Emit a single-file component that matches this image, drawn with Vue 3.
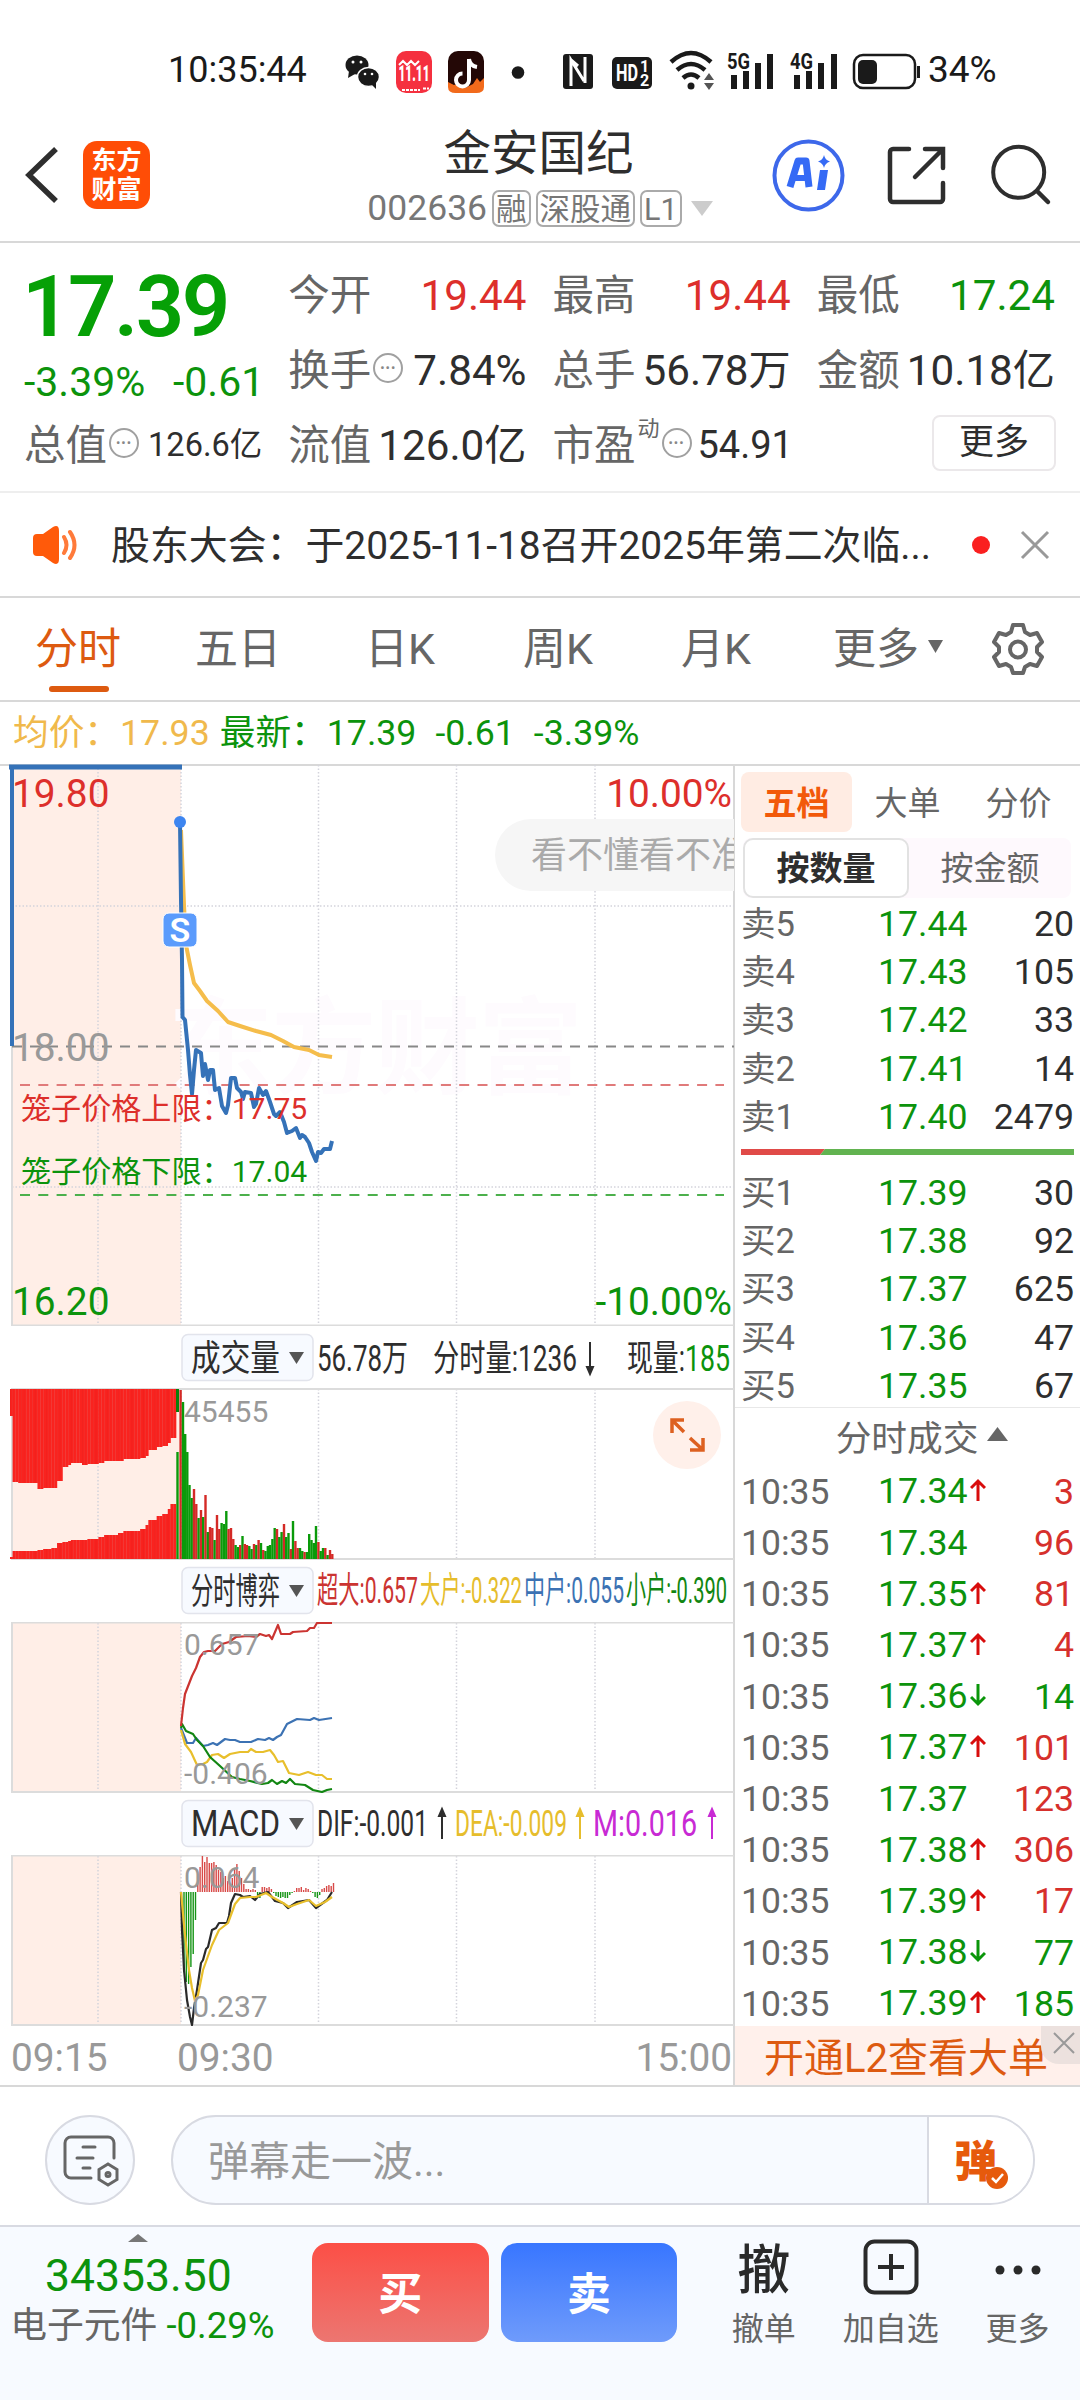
<template>
  <div class="page">
    <!-- Status bar -->
    <div class="status-bar">
      <span class="clock">10:35:44</span>
      <svg class="status-icons" width="590" height="50" viewBox="340 45 590 50">
        <g fill="#1a1a1a">
          <ellipse cx="357" cy="65" rx="11.5" ry="9.5" />
          <path d="M349 71l-1 7 7-4z" />
          <ellipse cx="368.500" cy="77" rx="11" ry="9.500" stroke="#fff" stroke-width="1.500" />
          <path d="M371 84l5 5v-7z" />
        </g>
        <g fill="#fff">
          <circle cx="353" cy="62" r="1.500" />
          <circle cx="361" cy="62" r="1.500" />
          <circle cx="365" cy="74" r="1.300" />
          <circle cx="372" cy="74" r="1.300" />
        </g>
        <rect x="396" y="51" width="36" height="42" rx="10" fill="#f5303f" />
        <text x="398.500" y="81" class="sale" textLength="31" lengthAdjust="spacingAndGlyphs">11.11</text>
        <path d="M399 65l4-4 4 4 4-4 4 4 4-4" fill="none" stroke="#fff" stroke-width="2" />
        <path d="M402 90h18M423 88.500h6" stroke="#fff" stroke-width="2" stroke-dasharray="3 1" />
        <rect x="448" y="51" width="36" height="42" rx="10" fill="#240806" />
        <path d="M448 82l6 3 5-2 6 5 8-4 4-6 3 4 4-4v9q0 6-8 6h-20q-8 0-8-6z" fill="#f26a1b" />
        <path d="M469 59v21a6.500 6.500 0 1 1-6.500-6.500M469 59q1 7 8 8" fill="none" stroke="#fff" stroke-width="4" />
        <circle cx="518" cy="72.500" r="6.300" fill="#1a1a1a" />
        <rect x="563" y="54" width="30" height="35" rx="3" fill="#1a1a1a" />
        <path d="M571 86V60l13 21M571 60l7 6M585 57v26" fill="none" stroke="#fff" stroke-width="3" />
        <rect x="612" y="57" width="40" height="32" rx="5" fill="#1a1a1a" />
        <text x="616" y="81" class="hd" textLength="22" lengthAdjust="spacingAndGlyphs">HD</text>
        <text x="640" y="72" class="hd-num">1</text>
        <text x="640" y="86" class="hd-num">2</text>
        <g fill="none" stroke="#1a1a1a" stroke-width="4.500">
          <path d="M671 62q20-18 40 0" />
          <path d="M677 70q14-12 28 0" />
          <path d="M683 78q8-7 16 0" />
        </g>
        <circle cx="691" cy="86" r="3.500" fill="#1a1a1a" />
        <path d="M704 80l5-7 5 7zM704 83l5 7 5-7z" fill="#555" />
        <g fill="#1a1a1a">
          <path d="M731 75h6v14h-6zM743 71h6v18h-6zM755 63h6v26h-6zM767 54h6v35h-6z" />
          <path d="M794 75h6v14h-6zM806 71h6v18h-6zM818 63h6v26h-6zM831 54h6v35h-6z" />
          <text x="727" y="69" class="net" textLength="23" lengthAdjust="spacingAndGlyphs">5G</text>
          <text x="790" y="69" class="net" textLength="23" lengthAdjust="spacingAndGlyphs">4G</text>
        </g>
        <rect x="854" y="55" width="61" height="33" rx="9" fill="none" stroke="#1a1a1a" stroke-width="2.500" />
        <rect x="858" y="60" width="19" height="24" rx="5" fill="#1a1a1a" />
        <path d="M918.500 66v12" stroke="#1a1a1a" stroke-width="3" />
      </svg>
      <span class="battery">34%</span>
    </div>

    <!-- Title bar -->
    <header class="header">
      <div class="header-left">
        <svg width="36" height="60" viewBox="0 0 36 60" fill="none" stroke="#2e2e2e" stroke-width="5.500">
          <path d="M33 4L6 30l27 26" />
        </svg>
        <div class="logo"><span>东方</span><span>财富</span></div>
      </div>
      <div class="header-title">
        <h1>金安国纪</h1>
        <div class="code-row">
          <span class="code">002636</span>
          <span v-for="t in tags" :key="t" class="tag">{{ t }}</span>
          <svg width="22" height="15" viewBox="0 0 22 15"><path d="M0 0h22L11 15z" fill="#ccc" /></svg>
        </div>
      </div>
      <svg class="header-icons" width="300" height="100" viewBox="0 0 300 100" fill="none">
        <circle cx="48.500" cy="45.500" r="34" stroke="#3d68ea" stroke-width="4" />
        <path d="M30 57L38 31h8l3 26" stroke="#356af5" stroke-width="7" stroke-linejoin="round" />
        <path d="M34 48h13" stroke="#356af5" stroke-width="6" />
        <path d="M60 40h8l-3 20h-8z" fill="#356af5" />
        <path d="M64 25q1 5 6 6.500-5 1.500-6 6.500-1-5-6-6.500 5-1.500 6-6.500z" fill="#356af5" />
        <path d="M149 19h-16a3 3 0 0 0-3 3v47a3 3 0 0 0 3 3h47a3 3 0 0 0 3-3V53M165 19h18v19M182 20l-27 27" stroke="#2e2e2e" stroke-width="4.500" stroke-linecap="round" />
        <circle cx="258.700" cy="42.300" r="25.500" stroke="#2e2e2e" stroke-width="4" />
        <path d="M277 61l11 11" stroke="#2e2e2e" stroke-width="4.500" stroke-linecap="round" />
      </svg>
    </header>

    <!-- Quote summary -->
    <section class="quote">
      <div class="quote-main">
        <div class="price">17.39</div>
        <div class="change"><span>-3.39%</span><span>-0.61</span></div>
        <div class="cell small">
          <span class="label">总值<i class="info">•••</i></span>
          <span class="value">126.6亿</span>
        </div>
      </div>
      <div v-for="(col, i) in quotes" :key="i" class="quote-col">
        <div v-for="q in col" :key="q.label" class="cell">
          <span class="label">{{ q.label }}<sup v-if="q.sup">{{ q.sup }}</sup><i v-if="q.info" class="info">•••</i></span>
          <span class="value" :class="[q.color, { pe: q.sup }]">{{ q.value }}</span>
        </div>
        <div v-if="i === 2" class="cell last"><button class="more-btn">更多</button></div>
      </div>
    </section>

    <!-- Notice -->
    <section class="notice">
      <svg width="46" height="38" viewBox="0 0 46 38">
        <path d="M0 12q0-4 4-4h6L20 1q6-3 6 4v28q0 7-6 4l-10-7H4q-4 0-4-4z" fill="#ff5a0a" />
        <path d="M31 11q5 8 0 16M37 6q9 13 0 26" fill="none" stroke="#ff7a3a" stroke-width="4" stroke-linecap="round" />
      </svg>
      <p>股东大会：于2025-11-18召开2025年第二次临...</p>
      <span class="red-dot"></span>
      <svg width="30" height="30" viewBox="0 0 30 30"><path d="M2 2l26 26M28 2L2 28" stroke="#999" stroke-width="3" /></svg>
    </section>

    <!-- Period tabs -->
    <nav class="tabs">
      <span v-for="(t, i) in tabs" :key="t" class="tab" :class="{ active: i === 0 }">{{ t }}</span>
      <span class="tab tab-more">更多<svg width="15" height="13" viewBox="0 0 15 13"><path d="M0 0h15L7.500 13z" fill="#666" /></svg></span>
      <svg width="54" height="54" viewBox="0 0 54 54" fill="none" stroke="#666" stroke-width="4" stroke-linejoin="round">
        <path d="M22 3h10l2 7 5 3 7-2 5 9-5 5v5l5 5-5 9-7-2-5 3-2 6H22l-2-6-5-3-7 2-5-9 5-5v-5l-5-5 5-9 7 2 5-3z" />
        <circle cx="27" cy="27.500" r="8" />
      </svg>
    </nav>

    <div class="legend">
      <span class="avg">均价：17.93</span>
      <span class="last-price">最新：17.39</span>
      <span>-0.61</span>
      <span>-3.39%</span>
    </div>

    <main class="main">
      <div class="charts">
        <!-- Intraday price -->
        <svg class="chart" width="734" height="562" viewBox="0 764 734 562">
          <rect x="12" y="765" width="169" height="560" class="pre" />
          <text x="168" y="1085" class="watermark" textLength="415">东方财富</text>
          <path v-for="x in gridX" :key="x" :d="`M${x} 765V1325`" class="grid" />
          <path d="M12 906H734M12 1187H734" class="grid" />
          <path d="M12 764V1325.500H734" class="frame" />
          <path d="M12 1046.500H734" stroke="#888" stroke-width="2" stroke-dasharray="10 8" />
          <path d="M20 1085H724" stroke="#e07a7a" stroke-width="2" stroke-dasharray="10 8.300" />
          <path d="M20 1195H724" stroke="#4cb04c" stroke-width="2" stroke-dasharray="10 8.300" />
          <path d="M9 767H182" stroke="#3572b8" stroke-width="5" />
          <path d="M12 767V1046" stroke="#3572b8" stroke-width="4" />
          <polyline :points="avgLine" class="line" stroke="#f5bd4b" stroke-width="4" />
          <polyline :points="priceLine" class="line" stroke="#3572b8" stroke-width="4" />
          <circle cx="180" cy="822" r="6" fill="#3d85f0" />
          <rect x="163" y="913" width="34" height="34" rx="6" fill="#5b9bfc" stroke="#fff" />
          <text x="180" y="942" class="marker">S</text>
          <text x="12" y="807" class="axis red">19.80</text>
          <text x="732" y="807" class="axis end red">10.00%</text>
          <text x="12" y="1061" class="axis">18.00</text>
          <text x="12" y="1315" class="axis green">16.20</text>
          <text x="732" y="1315" class="axis end green">-10.00%</text>
          <text x="21" y="1119" class="cage red">笼子价格上限：17.75</text>
          <text x="21" y="1182" class="cage green">笼子价格下限：17.04</text>
          <rect x="495" y="819" width="300" height="72" rx="36" fill="#f6f6f6" />
          <text x="531" y="868" class="bullet">看不懂看不准</text>
        </svg>

        <div class="sub-head">
          <svg width="734" height="62" viewBox="0 0 734 62">
            <rect x="182" y="8.500" width="131" height="46" rx="6" class="picker" />
            <text x="191" y="45" textLength="89" lengthAdjust="spacingAndGlyphs" class="pick">成交量</text>
            <path d="M289 26h15l-7.500 12z" fill="#555" />
            <text x="317" y="45" textLength="91" lengthAdjust="spacingAndGlyphs">56.78万</text>
            <text x="433" y="45" textLength="144" lengthAdjust="spacingAndGlyphs">分时量:1236</text>
            <path d="M590 16v28M587 41h6l-3 7z" class="arrow" />
            <text x="627" y="45" textLength="58" lengthAdjust="spacingAndGlyphs">现量:</text>
            <text x="685" y="45" textLength="45" lengthAdjust="spacingAndGlyphs" class="green">185</text>
          </svg>
        </div>

        <!-- Volume -->
        <svg class="chart" width="734" height="172" viewBox="0 1388 734 172">
          <rect x="12" y="1389" width="169" height="170" class="pre" />
          <path v-for="x in gridX" :key="x" :d="`M${x} 1389V1559`" class="grid" />
          <path d="M734 1389H12V1559H734" class="frame" />
          <rect v-for="(b, i) in auctionBars" :key="'a' + i" :x="b.x" :y="b.y" width="2.900" :height="b.h" fill="#f9231f" />
          <rect v-for="(b, i) in auctionBars" :key="'s' + i" :x="b.x" :y="b.y" width="0.300" :height="b.h" fill="#e01c1c" />
          <rect x="176" y="1389" width="3" height="23" fill="#08800a" />
          <rect v-for="b in volBars" :key="b[0]" :x="b[0] - 1.2" :y="b[1]" width="2.400" :height="1559 - b[1]" :fill="b[2] ? '#d42a26' : '#0a9a0a'" />
          <text x="184" y="1422" class="scale">45455</text>
          <circle cx="687" cy="1435" r="34" fill="#fff0ea" />
          <path d="M672 1433v-13h12M672 1420l12 12M703 1438v12h-13M703 1450l-13-12" fill="none" stroke="#dd6020" stroke-width="3.500" />
        </svg>

        <div class="sub-head">
          <svg width="734" height="62" viewBox="0 0 734 62">
            <rect x="182" y="7.500" width="131" height="46" rx="6" class="picker" />
            <text x="191" y="44" textLength="89" lengthAdjust="spacingAndGlyphs" class="pick">分时博弈</text>
            <path d="M289 25h15l-7.500 12z" fill="#555" />
            <text x="317" y="43" textLength="101" lengthAdjust="spacingAndGlyphs" fill="#cb3431">超大:0.657</text>
            <text x="420" y="43" textLength="102" lengthAdjust="spacingAndGlyphs" class="yellow">大户:-0.322</text>
            <text x="524" y="43" textLength="100" lengthAdjust="spacingAndGlyphs" fill="#3c72b3">中户:0.055</text>
            <text x="626" y="43" textLength="101" lengthAdjust="spacingAndGlyphs" fill="#128612">小户:-0.390</text>
          </svg>
        </div>

        <!-- Capital game -->
        <svg class="chart" width="734" height="171" viewBox="0 1622 734 171">
          <rect x="12" y="1623" width="169" height="169" class="pre" />
          <path v-for="x in gridX" :key="x" :d="`M${x} 1623V1792`" class="grid" />
          <path d="M734 1622.500H12V1792H734" class="frame" />
          <polyline v-for="g in gameLines" :key="g.color" :points="g.points" class="line" :stroke="g.color" stroke-width="2.200" />
          <text x="184" y="1655" class="scale">0.657</text>
          <text x="184" y="1784" class="scale">-0.406</text>
        </svg>

        <div class="sub-head">
          <svg width="734" height="62" viewBox="0 0 734 62">
            <rect x="182" y="7.500" width="131" height="46" rx="6" class="picker" />
            <text x="191" y="43" textLength="89" lengthAdjust="spacingAndGlyphs" class="pick">MACD</text>
            <path d="M289 25h15l-7.500 12z" fill="#555" />
            <text x="317" y="43" textLength="111" lengthAdjust="spacingAndGlyphs">DIF:-0.001</text>
            <path d="M442 46V22M439 23h6l-3-7z" class="arrow" />
            <text x="455" y="43" textLength="112" lengthAdjust="spacingAndGlyphs" class="yellow">DEA:-0.009</text>
            <path d="M580 46V22M577 23h6l-3-7z" class="arrow arrow-yellow" />
            <text x="593" y="43" textLength="104" lengthAdjust="spacingAndGlyphs" fill="#c82ad4">M:0.016</text>
            <path d="M712 46V22M709 23h6l-3-7z" class="arrow arrow-purple" />
          </svg>
        </div>

        <!-- MACD -->
        <svg class="chart" width="734" height="171" viewBox="0 1855 734 171">
          <rect x="12" y="1856" width="169" height="169" class="pre" />
          <path v-for="x in gridX" :key="x" :d="`M${x} 1856V2025`" class="grid" />
          <path d="M734 1855.500H12V2025H734" class="frame" />
          <rect v-for="(h, i) in macdBars" :key="i" :x="181 + i * 2.3" :y="h > 0 ? 1892 - h : 1892" width="1.400" :height="Math.abs(h)" :fill="h > 0 ? '#d84a48' : '#149414'" />
          <polyline :points="difLine" class="line" stroke="#2a2a2a" stroke-width="2.200" />
          <polyline :points="deaLine" class="line" stroke="#e8bf2c" stroke-width="2.200" />
          <text x="184" y="1888" class="scale">0.064</text>
          <text x="184" y="2017" class="scale">-0.237</text>
        </svg>

        <div class="time-axis"><span>09:15</span><span>09:30</span><span class="close-time">15:00</span></div>
      </div>

      <!-- Order book -->
      <aside class="book">
        <div class="book-tabs"><span class="on">五档</span><span>大单</span><span>分价</span></div>
        <div class="segment"><span class="on">按数量</span><span>按金额</span></div>
        <div class="levels">
          <div v-for="r in sells" :key="r[0]" class="row level">
            <span>{{ r[0] }}</span><span class="green">{{ r[1] }}</span><span class="vol">{{ r[2] }}</span>
          </div>
        </div>
        <svg class="ratio" width="333" height="6" viewBox="0 0 333 6">
          <path d="M0 0h84l-5 6H0z" fill="#e04a48" /><path d="M84 0h249v6H79z" fill="#62b350" />
        </svg>
        <div class="levels buys">
          <div v-for="r in buys" :key="r[0]" class="row level">
            <span>{{ r[0] }}</span><span class="green">{{ r[1] }}</span><span class="vol">{{ r[2] }}</span>
          </div>
        </div>
        <div class="deals-title">分时成交<svg width="21" height="14" viewBox="0 0 21 14"><path d="M0 14L10.500 0 21 14z" fill="#666" /></svg></div>
        <div v-for="(d, i) in deals" :key="i" class="row deal">
          <span>10:35</span>
          <span class="green deal-price">{{ d[0] }}<svg v-if="d[1]" width="16" height="24" viewBox="0 0 16 24" fill="none" stroke-width="3">
            <path v-if="d[1] > 0" d="M8 23V3M1 10l7-7 7 7" stroke="#d80c0c" />
            <path v-else d="M8 1v20M1 14l7 7 7-7" stroke="#0a960a" />
          </svg></span>
          <span class="vol" :class="d[3] ? 'green' : 'red'">{{ d[2] }}</span>
        </div>
        <div class="l2-banner">
          开通L2查看大单
          <span class="l2-close"><svg width="22" height="22" viewBox="0 0 22 22"><path d="M1 1l20 20M21 1L1 21" stroke="#999" stroke-width="2" /></svg></span>
        </div>
      </aside>
    </main>

    <!-- Comment bar -->
    <section class="comment">
      <div class="round-btn">
        <svg width="58" height="58" viewBox="0 0 58 58" fill="none" stroke="#666" stroke-width="3" stroke-linecap="round">
          <path d="M30 47H10a6 6 0 0 1-6-6V12a6 6 0 0 1 6-6h37a6 6 0 0 1 6 6v15M22 16h12M16 27h16M22 37h7" />
          <path d="M47 33l9 5.500v10L47 54l-9-5.500v-10z" />
          <circle cx="47" cy="43.500" r="2" />
        </svg>
      </div>
      <div class="input">
        <span class="placeholder">弹幕走一波...</span>
        <span class="danmu">弹<svg width="22" height="22" viewBox="0 0 22 22"><circle cx="11" cy="11" r="11" fill="#e65a0c" /><path d="M6 11l4 4 7-8" fill="none" stroke="#fff" stroke-width="2.500" /></svg></span>
      </div>
    </section>

    <!-- Bottom bar -->
    <footer class="bottom">
      <div class="index">
        <svg width="20" height="8" viewBox="0 0 20 8"><path d="M0 8l10-8 10 8z" fill="#777" /></svg>
        <div class="index-value">34353.50</div>
        <div class="index-name">电子元件 <span>-0.29%</span></div>
      </div>
      <button class="trade buy">买</button>
      <button class="trade sell">卖</button>
      <div class="action cancel"><b>撤</b><span>撤单</span></div>
      <div class="action add">
        <svg width="56" height="56" viewBox="0 0 56 56" fill="none" stroke="#2a2a2a" stroke-width="4">
          <rect x="2.500" y="2.500" width="51" height="51" rx="9" /><path d="M28 15v26M15 28h26" />
        </svg>
        <span>加自选</span>
      </div>
      <div class="action">
        <svg width="56" height="56" viewBox="0 0 56 56" fill="#2a2a2a"><circle cx="10" cy="31" r="4.500" /><circle cx="28" cy="31" r="4.500" /><circle cx="46" cy="31" r="4.500" /></svg>
        <span>更多</span>
      </div>
    </footer>
  </div>
</template>

<script setup>
const tags = ['融', '深股通', 'L1']
const tabs = ['分时', '五日', '日K', '周K', '月K']

const quotes = [
  [
    { label: '今开', value: '19.44', color: 'red' },
    { label: '换手', value: '7.84%', info: true },
    { label: '流值', value: '126.0亿' }
  ],
  [
    { label: '最高', value: '19.44', color: 'red' },
    { label: '总手', value: '56.78万' },
    { label: '市盈', value: '54.91', sup: '动', info: true }
  ],
  [
    { label: '最低', value: '17.24', color: 'green' },
    { label: '金额', value: '10.18亿' }
  ]
]

const sells = [
  ['卖5', '17.44', 20],
  ['卖4', '17.43', 105],
  ['卖3', '17.42', 33],
  ['卖2', '17.41', 14],
  ['卖1', '17.40', 2479]
]
const buys = [
  ['买1', '17.39', 30],
  ['买2', '17.38', 92],
  ['买3', '17.37', 625],
  ['买4', '17.36', 47],
  ['买5', '17.35', 67]
]

// price, direction, volume, sold
const deals = [
  ['17.34', 1, 3],
  ['17.34', 0, 96],
  ['17.35', 1, 81],
  ['17.37', 1, 4],
  ['17.36', -1, 14, true],
  ['17.37', 1, 101],
  ['17.37', 0, 123],
  ['17.38', 1, 306],
  ['17.39', 1, 17],
  ['17.38', -1, 77, true],
  ['17.39', 1, 185, true]
]

const gridX = [98, 181, 318.5, 456.5, 595]

const priceLine = '180,822 181,900 182,960 182.500,1017 185,1020 188,1050 190,1075 192,1094 194,1070 196,1050 201,1053 202,1065 203,1076 205,1064 208,1080 210,1070 213,1070 215,1090 219,1088 222,1106 226,1113 228,1105 231,1078 235,1078 237,1088 241,1092 243,1099 245,1092 251,1093 254,1107 256,1104 259,1088 263,1095 266,1091 270,1102 274,1114 276,1116 280,1112 284,1122 287,1133 292,1131 296,1128 300,1138 302,1135 305,1137 309,1143 312,1152 316,1161 318,1152 321,1153 324,1149 330,1149 332,1141'
const avgLine = '181,830 184,905 186,945 190,965 194,983 200,991 207,1001 218,1011 228,1022 240,1026 256,1031 271,1035 283,1041 294,1047 309,1050 319,1055 332,1057'

const gameLines = [
  { color: '#3c72b3', points: '181,1728 187,1743 193,1743 196,1738 203,1746 208,1745 213,1743 217,1745 225,1739 230,1740 235,1740 240,1742 251,1742 258,1739 265,1740 269,1738 273,1740 277,1737 281,1735 287,1724 293,1721 297,1719 310,1720 314,1718 319,1720 332,1718' },
  { color: '#e8bf2c', points: '181,1730 185,1744 191,1752 197,1765 203,1764 207,1762 212,1755 218,1754 224,1758 230,1754 240,1752 248,1752 251,1749 256,1752 263,1752 270,1750 274,1755 278,1762 283,1761 289,1773 299,1775 308,1772 316,1775 322,1775 327,1779 332,1779' },
  { color: '#128612', points: '181,1728 182,1724 186,1731 193,1734 197,1740 203,1746 210,1757 220,1766 232,1777 240,1779 250,1781 262,1784 268,1783 272,1780 277,1784 282,1781 286,1783 290,1779 295,1784 305,1785 313,1790 322,1792 327,1790 332,1789' },
  { color: '#cb3431', points: '181,1726 183,1708 185,1694 192,1676 196,1668 200,1657 204,1652 208,1651 215,1651 222,1644 229,1642 236,1637 248,1636 256,1637 260,1634 266,1636 269,1635 272,1639 278,1625 281,1634 290,1634 293,1632 307,1631 310,1628 314,1628 317,1623 332,1623' }
]

const difLine = '181,1892 182,1930 184,1970 187,2000 190,2017 192,2025 194,2008 197,1990 201,1963 203,1960 206,1949 208,1947 212,1930 216,1928 219,1923 227,1923 229,1916 231,1903 235,1894 240,1895 243,1897 250,1896 255,1900 260,1894 268,1892 275,1901 283,1903 288,1908 297,1902 309,1900 316,1908 327,1900 332,1892'
const deaLine = '181,1892 185,1935 189,1970 192,1988 195,2001 198,1995 203,1970 212,1945 219,1930 228,1923 235,1904 240,1898 250,1897 256,1897 266,1893 272,1897 283,1903 289,1907 297,1904 309,1900 316,1906 325,1902 332,1897'

const macdBars = [
  0, -80, -90, -92, -75, -62, -28, 12, 25, 36, 30, 35, 29, 29, 30, 27, 22, 20, 14, 16,
  11, 7, 14, 23, 28, 21, 14, 8, 3, 3, 2, 3, 2, -3, -6, 5, 5, 4, 5, 3,
  -1, -4, -5, -6, -5, -6, -6, -3, -1, 1, 4, 4, 5, 2, 4, 3, 1, -1, -5, -6,
  -3, 3, 4, 6, 7, 6, 9
]

// x, y edge of the upper and lower auction areas
const auction = [
  [10, 1416, 1557], [13, 1482, 1551], [18, 1483, 1551], [36, 1489, 1550], [43, 1488, 1549], [50, 1488, 1548],
  [56, 1481, 1543], [61, 1467, 1542], [66, 1465, 1541], [69, 1463, 1540], [80, 1465, 1540], [88, 1464, 1539],
  [98, 1463, 1537], [103, 1461, 1535], [118, 1461, 1533], [124, 1459, 1531], [138, 1458, 1529], [144, 1456, 1525],
  [149, 1450, 1520], [155, 1447, 1516], [162, 1446, 1514], [168, 1443, 1509], [171, 1438, 1504], [174, 1416, 1482]
]
const auctionBars = []
for (let x = 10; x < 176; x += 2.77) {
  const step = auction.filter((a) => a[0] <= x + 0.5).pop()
  auctionBars.push({ x, y: 1389, h: step[1] - 1389 }, { x, y: step[2], h: 1559 - step[2] })
}

// x, top, rising
const volBars = [
  [177.500, 1452, 0], [180.600, 1390, 1], [183, 1402, 0], [185.200, 1434, 0], [187.300, 1452, 0], [189.500, 1485, 0],
  [191.700, 1498, 0], [194, 1489, 1], [196.300, 1504, 1], [198.600, 1518, 0], [201, 1510, 1], [203.200, 1517, 0],
  [205.500, 1495, 1], [207.800, 1532, 0], [210, 1527, 1], [212.300, 1528, 1], [214.600, 1540, 0], [217, 1515, 1],
  [219.300, 1529, 1], [221.600, 1523, 0], [224, 1524, 0], [226.300, 1511, 0], [228.600, 1529, 1], [231, 1528, 1],
  [233.300, 1539, 1], [235.600, 1545, 0], [238, 1547, 0], [240.200, 1545, 1], [242.500, 1536, 0], [244.800, 1544, 1],
  [247, 1545, 1], [249.300, 1546, 0], [251.600, 1549, 0], [254, 1544, 1], [256.300, 1545, 0], [258.600, 1540, 1],
  [261, 1543, 0], [263.300, 1550, 1], [265.500, 1551, 0], [267.800, 1546, 0], [270, 1545, 0], [272.400, 1539, 0],
  [274.700, 1528, 0], [277, 1529, 1], [279.300, 1537, 0], [281.600, 1532, 0], [284, 1524, 1], [286.200, 1537, 0],
  [288.500, 1533, 0], [290.800, 1549, 1], [293, 1521, 0], [295.400, 1541, 1], [297.700, 1548, 1], [300, 1548, 0],
  [302.300, 1551, 0], [304.600, 1552, 1], [307, 1552, 0], [309.200, 1534, 0], [311.500, 1540, 0], [313.800, 1543, 0],
  [316, 1526, 0], [318.400, 1542, 1], [320.700, 1551, 0], [323, 1548, 0], [325.300, 1548, 1], [327.600, 1555, 0],
  [330, 1550, 1], [332.300, 1554, 1]
]
</script>

<style>
body {
  background: #fff;
}
</style>

<style scoped>
.page {
  width: 1080px;
  height: 2400px;
  overflow: hidden;
  background: #fff;
  color: #2e2e2e;
  font-family: Roboto, 'Noto Sans CJK SC', sans-serif;
}

.page * {
  box-sizing: border-box;
}

svg {
  display: block;
  flex-shrink: 0;
}

.red {
  color: #dd2f2b;
  fill: #dd2f2b;
}

.green {
  color: #0c930c;
  fill: #0c930c;
}

/* Status bar */
.status-bar {
  display: flex;
  height: 90px;
  padding: 45px 0 0 168px;
  font-size: 36px;
  line-height: 50px;
  color: #1a1a1a;
}

.clock {
  width: 172px;
}

.battery {
  margin-left: -2px;
  font-size: 37px;
}

.sale {
  font-size: 22px;
  font-weight: 900;
  fill: #fff;
}

.hd {
  font-size: 24px;
  font-weight: 700;
  fill: #fff;
}

.hd-num {
  font-size: 16px;
  font-weight: 700;
  fill: #fff;
}

.net {
  font-size: 22px;
  font-weight: 700;
}

/* Title bar */
.header {
  display: flex;
  height: 153px;
  border-bottom: 2px solid #d8d8d8;
}

.header-left {
  display: flex;
  align-items: center;
  gap: 24px;
  width: 320px;
  height: 170px;
  padding-left: 23px;
}

.logo {
  display: flex;
  flex-direction: column;
  align-items: center;
  justify-content: center;
  width: 67px;
  height: 68px;
  border-radius: 14px;
  background: #ff4d06;
  color: #fff;
  font-size: 25px;
  font-weight: 700;
  line-height: 29px;
}

.header-title {
  display: flex;
  flex-direction: column;
  align-items: center;
  width: 440px;
  padding-top: 34px;
}

.header-title h1 {
  margin: 0 3px 0 0;
  font-size: 47.5px;
  font-weight: 400;
  line-height: 60px;
}

.code-row {
  display: flex;
  align-items: center;
  gap: 5px;
  height: 48px;
  padding-left: 0;
  color: #777;
}

.code {
  font-size: 35.5px;
}

.tag {
  height: 37px;
  padding: 0 2px;
  border: 2px solid #aaa;
  border-radius: 7px;
  font-size: 30.5px;
  line-height: 35px;
}

.code-row svg {
  margin-left: 4px;
}

.header-icons {
  margin-top: 40px;
}

/* Quote */
.quote {
  display: flex;
  gap: 26px;
  height: 250px;
  padding: 15px 25px 0 24px;
  border-bottom: 2px solid #eee;
}

.quote-main,
.quote-col {
  flex: 1 1 0;
  min-width: 0;
}

.price {
  height: 99px;
  font-size: 85px;
  font-weight: 600;
  letter-spacing: -2.5px;
  line-height: 99px;
  margin-left: -2px;
  color: #06a006;
}

.change {
  display: flex;
  justify-content: space-between;
  height: 51px;
  margin-right: -2px;
  font-size: 41px;
  line-height: 51px;
  color: #0c930c;
}

.cell {
  display: flex;
  justify-content: space-between;
  height: 75px;
  line-height: 75px;
  font-size: 41.5px;
  white-space: nowrap;
}

.label {
  display: flex;
  align-items: center;
  color: #666;
}

.value {
  font-size: 42.2px;
}

.label sup {
  align-self: flex-start;
  width: 22px;
  margin-left: 2px;
  font-size: 22px;
  line-height: 42px;
}

.info {
  display: flex;
  align-items: center;
  justify-content: center;
  width: 30px;
  height: 30px;
  margin: 0 0 6px 2px;
  border: 2px solid #a0a0a0;
  border-radius: 50%;
  color: #888;
  font-size: 13px;
  font-style: normal;
  letter-spacing: 1px;
}

.small .value {
  font-size: 32.5px;
}

.value.pe {
  margin-right: auto;
  padding-left: 6px;
  font-size: 38px;
}

.last {
  align-items: center;
  justify-content: flex-end;
  margin: -3px -1px 0 0;
}

.more-btn {
  width: 124px;
  height: 56px;
  padding: 0;
  border: 2px solid #ebe8ea;
  border-radius: 8px;
  background: #fff;
  color: #2e2e2e;
  font: inherit;
  font-size: 35px;
  line-height: 50px;
}

/* Notice */
.notice {
  display: flex;
  align-items: center;
  height: 105px;
  padding-left: 33px;
  border-bottom: 2px solid #d8d8d8;
}

.notice p {
  width: 861px;
  margin: 0 0 5px 32px;
  font-size: 38.9px;
  white-space: nowrap;
}

.red-dot {
  width: 18px;
  height: 18px;
  margin-right: 30px;
  border-radius: 50%;
  background: #fa2020;
}

/* Period tabs */
.tabs {
  display: flex;
  align-items: center;
  height: 104px;
  padding: 0 35px;
  border-bottom: 2px solid #d8d8d8;
  font-size: 43px;
  color: #666;
}

.tab {
  position: relative;
  width: 158px;
  line-height: 106px;
}

.tab:nth-child(2) {
  width: 170px;
}

.tab.active {
  width: 160px;
  color: #dd5a10;
}

.tab.active::after {
  content: '';
  position: absolute;
  left: 14px;
  bottom: 10px;
  width: 60px;
  height: 6px;
  border-radius: 3px;
  background: #dd5a10;
}

.tab-more {
  display: flex;
  align-items: center;
  gap: 9px;
  margin-left: -6px;
}

.tab-more svg {
  margin-bottom: 6px;
}

.legend {
  display: flex;
  gap: 19px;
  height: 62px;
  padding-left: 13px;
  font-size: 35.7px;
  line-height: 63px;
  color: #0c930c;
}

.avg {
  margin-right: -9px;
  color: #f0b94c;
}

/* Charts */
.main {
  display: flex;
  height: 1323px;
  border-top: 2px solid #d8d8d8;
  border-bottom: 2px solid #d8d8d8;
}

.charts {
  width: 735px;
  margin-top: -2px;
  border-right: 2px solid #d8d8d8;
}

.pre {
  fill: #ffeee7;
}

.grid {
  stroke: #d4d4dc;
  stroke-width: 1.5;
  stroke-dasharray: 1.500 2;
}

.frame {
  fill: none;
  stroke: #dcdcdc;
  stroke-width: 2;
}

.line {
  fill: none;
  stroke-linejoin: round;
}

.watermark {
  font-size: 105px;
  font-weight: 700;
  fill: #fefbfe;
}

.axis {
  font-size: 38.8px;
  fill: #999;
}

.axis.red,
.cage.red {
  fill: #dd2f2b;
}

.axis.green,
.cage.green {
  fill: #0c930c;
}

.end {
  text-anchor: end;
}

.cage {
  font-size: 30.100px;
}

.marker {
  font-size: 34px;
  font-weight: 600;
  fill: #fff;
  text-anchor: middle;
}

.bullet {
  font-size: 36px;
  fill: #aaa;
}

.scale {
  font-size: 30px;
  fill: #999;
}

.sub-head text {
  font-size: 36px;
}

.sub-head text:not([fill]) {
  fill: #2e2e2e;
}

.sub-head text.green {
  fill: #0c930c;
}

.sub-head text.yellow {
  fill: #e6bd2c;
}

.picker {
  fill: #f7faff;
  stroke: #e2e4ec;
  stroke-width: 1.5;
}

.arrow {
  fill: #2e2e2e;
  stroke: #2e2e2e;
  stroke-width: 2;
}

.arrow-yellow {
  fill: #e6bd2c;
  stroke: #e6bd2c;
}

.arrow-purple {
  fill: #c82ad4;
  stroke: #c82ad4;
}

.time-axis {
  display: flex;
  padding: 0 1px 0 11px;
  font-size: 38.8px;
  line-height: 63px;
  color: #999;
}

.time-axis span {
  width: 166px;
}

.time-axis .close-time {
  width: auto;
  margin-left: auto;
}

/* Order book */
.book {
  flex: 1;
  display: flex;
  flex-direction: column;
  font-size: 35.7px;
  color: #666;
}

.book-tabs {
  display: flex;
  height: 60px;
  margin: 6px 0 6px 6px;
  font-size: 33px;
  line-height: 63px;
  text-align: center;
}

.book-tabs span {
  width: 111px;
}

.book-tabs .on {
  border-radius: 8px;
  background: #ffece3;
  color: #f2590a;
  font-weight: 700;
}

.segment {
  display: flex;
  height: 60px;
  margin: 0 9px 0 8px;
  border-radius: 8px;
  background: #fef9fd;
  font-size: 33px;
  line-height: 61px;
  text-align: center;
}

.segment span {
  flex: 1;
}

.segment .on {
  border: 2px solid #e2e2e2;
  border-radius: 10px;
  background: #fff;
  color: #2e2e2e;
  font-weight: 700;
  line-height: 58px;
}

.levels {
  margin-top: 2px;
}

.buys {
  margin-top: 14px;
}

.row {
  display: flex;
  padding: 0 6px;
}

.row span:first-child {
  width: 137px;
}

.level {
  height: 48.2px;
  line-height: 48.2px;
}

.level span:first-child {
  font-size: 34.5px;
}

.vol {
  margin-left: auto;
  color: #2e2e2e;
}

.vol.red {
  color: #d6302c;
}

.vol.green {
  color: #0c930c;
}

.ratio {
  margin: 8px 0 0 6px;
}

.deals-title {
  display: flex;
  justify-content: center;
  gap: 9px;
  height: 59px;
  margin-top: -3px;
  padding-left: 29px;
  border-top: 1px solid #e8e8e8;
  line-height: 62px;
}

.deals-title svg {
  margin-top: 19px;
}

.deal {
  height: 51.2px;
  line-height: 52px;
}

.deal span:first-child {
  font-size: 35.5px;
}

.deal-price {
  display: flex;
  align-items: center;
  gap: 2px;
}

.deal-price svg {
  margin-bottom: 2px;
}

.l2-banner {
  position: relative;
  flex: 1 1 0;
  min-height: 0;
  margin-top: -3px;
  padding-left: 29px;
  background: #fff0eb;
  color: #dd5a10;
  font-size: 40px;
  line-height: 65px;
  white-space: nowrap;
}

.l2-close {
  position: absolute;
  top: 0;
  right: 0;
  width: 39px;
  height: 38px;
  padding: 6px 0 0 12px;
  border-bottom-left-radius: 18px;
  background: #ece1de;
}

/* Comment bar */
.comment {
  display: flex;
  align-items: center;
  gap: 36px;
  height: 138px;
  padding: 7px 45px 0;
}

.round-btn {
  display: flex;
  align-items: center;
  justify-content: center;
  width: 90px;
  height: 90px;
  border: 2px solid #d8dae2;
  border-radius: 50%;
  background: #f7faff;
}

.input {
  display: flex;
  width: 864px;
  height: 90px;
  border: 2px solid #d8dae2;
  border-radius: 45px;
  background: #f7faff;
  overflow: hidden;
}

.placeholder {
  flex: 1;
  padding-left: 35px;
  color: #999;
  font-size: 41px;
  line-height: 90px;
}

.danmu {
  display: flex;
  align-items: center;
  width: 106px;
  padding: 0 0 4px 25px;
  border-left: 2px solid #d8dae2;
  background: #fff;
  color: #e65a0c;
  font-size: 43px;
  font-weight: 900;
}

.danmu svg {
  margin: 40px 0 0 -11px;
}

/* Bottom bar */
.bottom {
  display: flex;
  height: 175px;
  border-top: 2px solid #d8dae2;
  background: #f7faff;
}

.index {
  display: flex;
  flex-direction: column;
  align-items: center;
  width: 277px;
  margin-right: 35px;
  padding: 7px 0 0;
}

.index-value {
  margin-top: 9px;
  font-size: 44.5px;
  line-height: 51px;
  color: #0c930c;
}

.index-name {
  margin-left: 8px;
  font-size: 36.8px;
  line-height: 48px;
  color: #666;
  white-space: nowrap;
}

.index-name span {
  font-size: 36.5px;
  color: #0c930c;
}

.trade {
  width: 177px;
  height: 99px;
  margin: 16px 12px 0 0;
  padding: 0 0 3px;
  border: 0;
  border-radius: 16px;
  color: #fff;
  font: inherit;
  font-size: 44px;
  font-weight: 700;
}

.buy {
  background: linear-gradient(#fc4f46, #ec7671);
}

.sell {
  background: linear-gradient(#3876ff, #6f9bfb);
}

.action {
  display: flex;
  flex-direction: column;
  align-items: center;
  gap: 10px;
  width: 125px;
  padding-top: 12px;
  color: #666;
  font-size: 32px;
  line-height: 48px;
}

.action b {
  height: 56px;
  color: #2a2a2a;
  font-size: 53px;
  font-weight: 500;
  line-height: 64px;
}

.cancel {
  margin-left: 12px;
}

.add {
  width: 129px;
}
</style>
